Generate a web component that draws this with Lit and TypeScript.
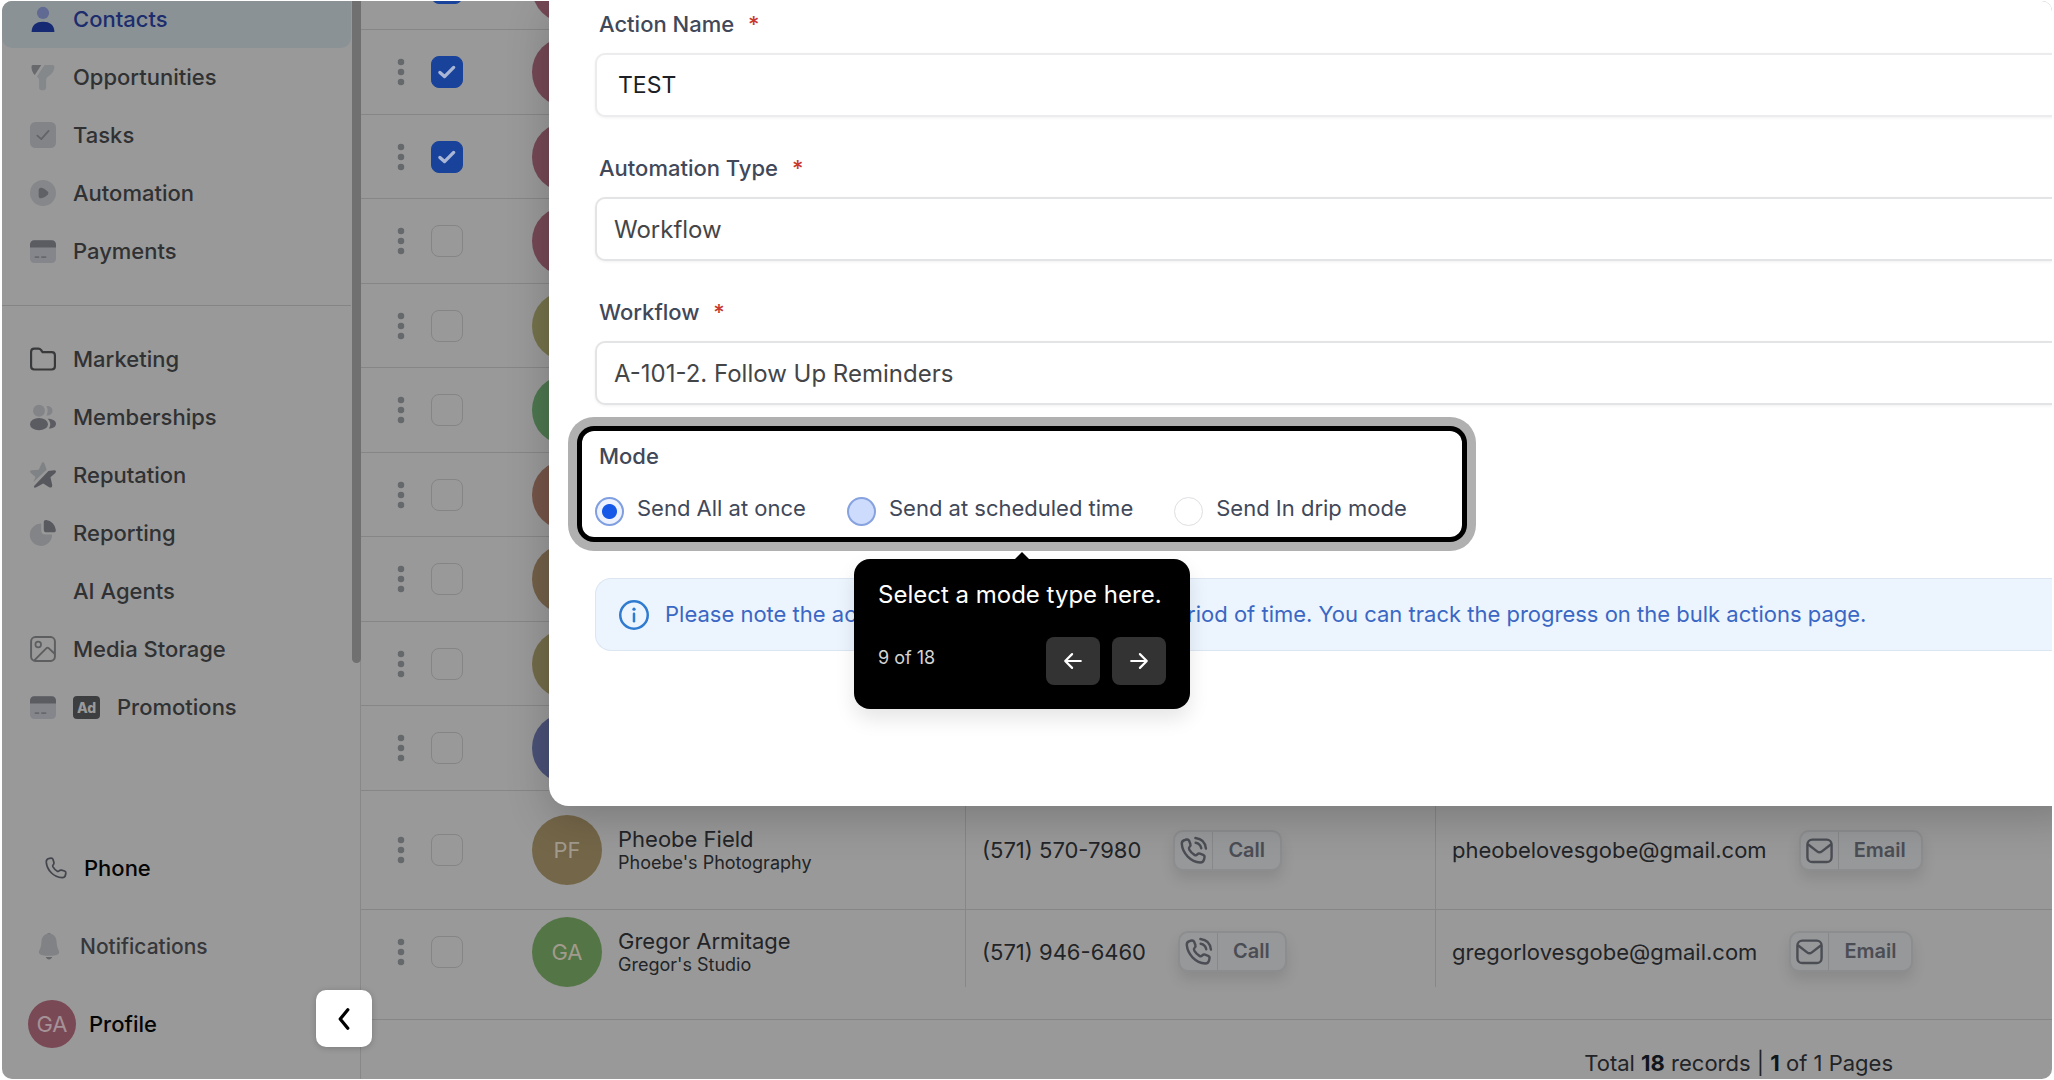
import { LitElement, html, css, svg, nothing, type TemplateResult } from "lit";
import { customElement } from "lit/decorators.js";

const glyphs: Record<string, TemplateResult> = {
  person: svg`<circle cx="12" cy="6.4" r="5.6" fill="#606a92"/><path d="M1.5 24C1.5 17.6 5.6 14.6 12 14.6S22.500 17.600 22.500 24Z" fill="#152a72"/>`,
  funnel: svg`<path d="M2.600 1H10.400L4.400 10.200C2.600 8.400 1.400 5.600 1.400 3.200 1.400 1.800 1.800 1 2.600 1Z" fill="#67696d"/><path d="M13.400 1H20.600C22.200 1 22.800 2.200 22.500 3.600 22 7 20 9 16.800 11.600 15.400 12.700 14.900 13.600 14.900 15V22C14.900 23.400 13.800 24.300 12.400 24.300H10.700C9.300 24.300 8.400 23.400 8.400 22V15C8.400 13.400 7.700 12.900 6.400 11.600Z" fill="#85888b"/>`,
  check: svg`<rect width="24" height="24" rx="5" fill="#828487"/><path d="M6.800 12.600 10.400 15.800 17.200 8.200" fill="none" stroke="#626468" stroke-width="1.600" stroke-linecap="round" stroke-linejoin="round"/>`,
  play: svg`<circle cx="12" cy="12" r="12" fill="#85878a"/><path d="M8 9.800C8 7.400 9.400 6.800 11.200 7.400 13.200 8 15 9.200 16.300 10.600 17.200 11.600 17.200 12.500 16.300 13.500 15 14.900 13.200 16 11.200 16.600 9.400 17.200 8 16.600 8 14.200Z" fill="#5f6166"/>`,
  card: svg`<rect y="2" width="24" height="21" rx="4" fill="#84868b"/><path d="M0 8.800V6C0 3.800 1.600 2 4 2H20C22.400 2 24 3.800 24 6V8.800Z" fill="#5b5c62"/><path d="M4.400 17.600H8.400M10.400 17.600H15" stroke="#66686d" stroke-width="1.600"/>`,
  folder: svg`<path d="M1 5.500C1 3.400 2 2.400 4 2.400H7.700C8.900 2.400 9.600 2.800 10.200 3.700L11.600 5.600H20C22 5.600 23 6.600 23 8.600V18.700C23 20.700 22 21.700 20 21.700H4C2 21.700 1 20.700 1 18.700Z" fill="none" stroke="#38393b" stroke-width="2"/>`,
  people: svg`<circle cx="8.300" cy="6.200" r="5.500" fill="#828487"/><path d="M15.200 1.800C18.400 1.600 20.800 3.400 20.800 6.200S18.400 10.800 15.200 10.600C16.600 8 16.600 4.400 15.200 1.800Z" fill="#828487"/><ellipse cx="8.300" cy="18.600" rx="8.300" ry="5.600" fill="#5b5c62"/><path d="M16.200 13.600C20 13.600 24 15 24 18.300 24 21.300 20.800 22.800 17.400 22.700 19.600 19.600 19 16 16.200 13.600Z" fill="#5b5c62"/>`,
  star: svg`<path d="M12 0C12.700 0 13.200 1 13.600 2L15.400 7.200 3 18.600 5 13.800 1 10.400C-.500 9-.400 8 1.500 7.700L8 7.200 10.400 2C10.800 1 11.300 0 12 0Z" fill="#808386"/><path d="M17 8.200 22.200 7.700C24.200 7.600 24.600 9 23.200 10.300L18.900 14 20.400 20.700C21 23.200 19.400 24.200 17.700 23.200L12.200 19.800 5.400 23.600C3.600 24.200 3.200 22.900 4.200 21.700Z" fill="#57585d"/>`,
  pie: svg`<path d="M10.400 3.300V10C10.400 12.200 11.600 13.400 13.800 13.400H20.400A10.300 10.300 0 1 1 10.400 3.300Z" fill="#828487"/><path d="M12.700 2C12.700.700 13.600 0 15 .100A10 10 0 0 1 23.800 9C24 10.500 23.300 11.400 22 11.400H15.400C13.600 11.400 12.700 10.500 12.700 8.700Z" fill="#595a60"/>`,
  image: svg`<rect x="1" y="1" width="22" height="22" rx="4" fill="none" stroke="#5d5e60" stroke-width="1.800"/><circle cx="7.600" cy="7.800" r="2.600" fill="none" stroke="#5d5e60" stroke-width="1.600"/><path d="M4 22.500 15.200 11.200Q16.200 10.300 17.200 11.200L23 16.600" fill="none" stroke="#5d5e60" stroke-width="1.800"/>`,
  handset: svg`<path d="M5 1.500 6.600 1.300C7.800 1.200 8.400 1.700 8.800 2.700L9.700 6C10 7.200 9.700 7.900 8.900 8.600 8.200 9.300 8.200 9.900 8.700 10.800A14 14 0 0 0 13.200 15.400C14.100 15.900 14.700 15.900 15.400 15.200 16.200 14.400 16.900 14.100 18 14.400L21.300 15.300C22.300 15.700 22.800 16.300 22.700 17.400L22.500 19C22.200 21.400 20.800 22.700 18.600 22.600 9.600 22 2 14.400 1.400 5.600 1.300 3.200 2.600 1.800 5 1.500Z" fill="none" stroke="currentColor" stroke-width="1.900"/>`,
  calling: svg`<path d="M4.800 3.300 6.300 2.900C7.300 2.700 8 3.100 8.400 4L9.400 6.600C9.800 7.600 9.500 8.200 8.800 8.900 8 9.700 8 10.300 8.500 11.200A13 13 0 0 0 12.800 15.600C13.700 16.100 14.400 16 15.100 15.200 15.800 14.500 16.400 14.200 17.400 14.600L20 15.700C20.900 16.100 21.300 16.700 21.100 17.700L20.800 19.200C20.400 21 19.400 21.900 17.600 21.900 9.600 21.200 3 14.600 2.300 6.600 2.200 4.800 3 3.700 4.800 3.300Z" fill="none" stroke="currentColor" stroke-width="2"/><path d="M13.800 5.600C16.400 6.100 17.900 7.600 18.400 10.200M13.600 1.700C18.800 2.300 21.700 5.200 22.300 10.400" fill="none" stroke="currentColor" stroke-width="2" stroke-linecap="round"/>`,
  mail: svg`<rect x="2" y="3" width="20" height="18.500" rx="4" fill="none" stroke="currentColor" stroke-width="2"/><path d="M2.400 6.800 10 12.700Q12 14.200 14 12.700L21.600 6.800" fill="none" stroke="currentColor" stroke-width="2"/>`,
  bell: svg`<path d="M9.600 1.400A3.400 3.400 0 0 1 14.400 1.400Z" fill="#66686c"/><path d="M12 .800C16.400 .800 18.800 4 19 8.200 19.200 12.400 20 14 20.800 15.600 22 18 21.400 19.600 18.800 20.200A30 30 0 0 1 5.200 20.200C2.600 19.600 2 18 3.200 15.600 4 14 4.800 12.400 5 8.200 5.200 4 7.600.800 12 .800Z" fill="#808285"/><path d="M9 22.200H15C14.400 23.800 13.400 24.400 12 24.400S9.600 23.800 9 22.200Z" fill="#66686c"/>`,
  tick: svg`<path d="M3.500 12.500 9 17.500 20 6.500" fill="none" stroke="#a9b6d6" stroke-width="4" stroke-linecap="round" stroke-linejoin="round"/>`,
  chevron: svg`<path d="M15.500 3.500 8.500 12 15.500 20.500" fill="none" stroke="#000" stroke-width="3" stroke-linecap="round" stroke-linejoin="round"/>`,
  left: svg`<path d="M20.500 12H3.500M11 4.500 3.500 12 11 19.500" fill="none" stroke="#fff" stroke-width="2.400" stroke-linecap="round" stroke-linejoin="round"/>`,
  right: svg`<path d="M3.500 12H20.500M13 4.500 20.500 12 13 19.500" fill="none" stroke="#fff" stroke-width="2.400" stroke-linecap="round" stroke-linejoin="round"/>`,
  info: svg`<circle cx="12" cy="12" r="11" fill="none" stroke="#2f7bd0" stroke-width="2"/><path d="M12 11V17" stroke="#2f7bd0" stroke-width="2" stroke-linecap="round"/><circle cx="12" cy="7.300" r="1.300" fill="#2f7bd0"/>`,
  dots: svg`<g fill="#66696c"><circle cx="12" cy="2.800" r="3"/><circle cx="12" cy="12" r="3"/><circle cx="12" cy="21.200" r="3"/></g>`,
};

const icon = (name: string) =>
  html`<svg class="icon" viewBox="0 0 24 24" aria-hidden="true">${glyphs[name]}</svg>`;

interface Contact {
  tone: string;
  checked?: boolean;
  initials?: string;
  name?: string;
  company?: string;
  phone?: string;
  email?: string;
}

const contacts: Contact[] = [
  { tone: "rose", checked: true },
  { tone: "rose", checked: true },
  { tone: "rose", checked: true },
  { tone: "rose" },
  { tone: "olive" },
  { tone: "green" },
  { tone: "clay" },
  { tone: "tan" },
  { tone: "khaki" },
  { tone: "blue" },
  { tone: "sand", initials: "PF", name: "Pheobe Field", company: "Phoebe's Photography", phone: "(571) 570-7980", email: "pheobelovesgobe@gmail.com" },
  { tone: "leaf", initials: "GA", name: "Gregor Armitage", company: "Gregor's Studio", phone: "(571) 946-6460", email: "gregorlovesgobe@gmail.com" },
];

const mainLinks = [
  ["person", "Contacts"],
  ["funnel", "Opportunities"],
  ["check", "Tasks"],
  ["play", "Automation"],
  ["card", "Payments"],
];

const moreLinks = [
  ["folder", "Marketing"],
  ["people", "Memberships"],
  ["star", "Reputation"],
  ["pie", "Reporting"],
  ["", "AI Agents"],
  ["image", "Media Storage"],
];

const base = css`
  * { box-sizing: border-box; }
  .icon { display: block; width: 26px; height: 26px; flex: none; overflow: visible; }
  button { font: inherit; color: inherit; border: 0; padding: 0; background: none; }
  a { color: inherit; text-decoration: none; }
`;

@customElement("side-nav")
export class SideNav extends LitElement {
  static styles = [base, css`
    :host { display: flex; flex-direction: column; width: 359px; flex: none; position: relative; border-right: 1px solid #888; font-size: 22px; font-weight: 500; color: #303133; }
    .group { display: flex; flex-direction: column; margin-right: 9px; }
    .group + .group { border-top: 1px solid #858585; padding-top: 24px; }
    .main { margin-top: -11px; padding-bottom: 25px; }
    .link { display: flex; align-items: center; height: 58px; padding-left: 28px; gap: 17px; }
    .current { background: #8b9296; color: #1c2c6d; border-radius: 0 0 10px 10px; }
    .blank { width: 26px; }
    .ad { width: 27px; height: 23px; border-radius: 4px; background: #3d3e3f; color: #999; font-size: 14px; line-height: 23px; font-weight: 800; text-align: center; }
    .bar { position: absolute; right: -1px; top: 0; width: 9px; height: 662px; background: #707070; border-radius: 0 0 5px 5px; }
    .foot { margin-top: auto; display: flex; flex-direction: column; padding: 0 0 16px 26px; color: #050505; }
    .foot a { display: flex; align-items: center; height: 78px; }
    .phone { padding-left: 17px; gap: 17px; }
    .phone .icon { width: 22px; height: 22px; color: #43454d; }
    .foot .notes { padding-left: 8px; gap: 18px; color: #36373a; font-size: 21px; }
    .profile { gap: 13px; }
    .avatar { width: 48px; height: 48px; border-radius: 50%; background: #7a4956; color: #a59297; font-weight: 400; line-height: 48px; text-align: center; }
    .fold { position: absolute; right: -12px; bottom: 32px; width: 56px; height: 57px; border-radius: 10px; background: #fff; display: flex; align-items: center; justify-content: center; box-shadow: 0 1px 6px rgba(0,0,0,.2); }
  `];

  render() {
    return html`
      <nav class="group main" aria-label="Main">
        ${mainLinks.map(([g, t], i) => html`<a href="#" class="link ${i === 0 ? "current" : ""}">${icon(g)}<span>${t}</span></a>`)}
      </nav>
      <nav class="group" aria-label="More">
        ${moreLinks.map(([g, t]) => html`<a href="#" class="link">${g ? icon(g) : html`<span class="blank"></span>`}<span>${t}</span></a>`)}
        <a href="#" class="link">${icon("card")}<span class="ad">Ad</span><span>Promotions</span></a>
      </nav>
      <div class="bar"></div>
      <div class="foot">
        <a href="#" class="phone">${icon("handset")}<span>Phone</span></a>
        <a href="#" class="notes">${icon("bell")}<span>Notifications</span></a>
        <a href="#" class="profile"><span class="avatar">GA</span><span>Profile</span></a>
      </div>
      <button class="fold" aria-label="Collapse menu">${icon("chevron")}</button>
    `;
  }
}

@customElement("contact-table")
export class ContactTable extends LitElement {
  static styles = [base, css`
    :host { display: flex; flex-direction: column; flex: 1; min-width: 0; margin-top: -55px; font-size: 22px; color: #222427; }
    .frame { border-bottom: 1px solid #868686; padding-bottom: 32px; }
    table { width: 100%; border-collapse: separate; border-spacing: 0; table-layout: fixed; }
    td { padding: 0; height: 84px; border-bottom: 1px solid #868686; vertical-align: middle; }
    tr:nth-child(even) td { height: 85px; }
    tr:nth-child(11) td { height: 119px; }
    tr:last-child td { height: 77px; padding-top: 6px; border-bottom: 0; }
    .menu { width: 56px; }
    .pick { width: 115px; }
    .who { width: 433px; }
    .tel { width: 470px; }
    .line { border-left: 1px solid #878787; }
    .more { display: block; margin-left: 27px; }
    .tickbox { position: relative; display: block; width: 32px; height: 32px; margin-left: 14px; }
    .tickbox input { appearance: none; display: block; margin: 0; width: 32px; height: 32px; border: 1px solid #858585; border-radius: 8px; }
    .tickbox input:checked { background: #19439b; border-color: #19439b; }
    .tickbox .icon { position: absolute; left: 6px; top: 6px; width: 20px; height: 20px; pointer-events: none; }
    .person { display: flex; align-items: center; gap: 16px; }
    .avatar { width: 70px; height: 70px; flex: none; border-radius: 50%; text-align: center; line-height: 70px; color: #a19b8e; }
    .rose { background: #744855; } .olive { background: #74724a; } .green { background: #4c764e; }
    .clay { background: #755448; } .tan { background: #725f47; } .khaki { background: #726b49; }
    .blue { background: #495176; } .sand { background: #746648; } .leaf { background: #547545; }
    .names { display: flex; flex-direction: column; }
    .name { line-height: 26px; }
    .company { font-size: 18px; line-height: 22px; }
    .reach { display: flex; align-items: center; gap: 32px; padding-left: 16px; white-space: nowrap; }
    .chip { display: flex; align-items: center; height: 41px; border: 2px solid #8c8d8e; border-radius: 10px; color: #4b4d55; font-size: 20px; font-weight: 600; box-shadow: 0 8px 14px rgba(0,0,0,.1); background: #979899; }
    .chip .icon { width: 29px; height: 29px; margin: 0 4px; }
    .chip span { border-left: 1px solid #868889; line-height: 37px; padding: 0 15px; }
    .total { display: flex; justify-content: flex-end; padding: 28px 159px 0 0; line-height: 30px; white-space: pre; }
    b { font-weight: 700; color: #10151c; }
  `];

  render() {
    return html`
      <div class="frame"><table>
        <colgroup><col class="menu"><col class="pick"><col class="who"><col class="tel"><col></colgroup>
        <tbody>${contacts.map((c, i) => html`<tr>
          <td><button class="more" aria-label="Row actions">${icon("dots")}</button></td>
          <td><label class="tickbox"><input type="checkbox" aria-label="Select contact ${i + 1}" .checked=${!!c.checked}>${c.checked ? icon("tick") : nothing}</label></td>
          <td><div class="person"><span class="avatar ${c.tone}">${c.initials ?? ""}</span>
            ${c.name ? html`<span class="names"><span class="name">${c.name}</span><span class="company">${c.company}</span></span>` : nothing}</div></td>
          <td class="line">${c.phone ? html`<div class="reach"><span>${c.phone}</span><button class="chip">${icon("calling")}<span>Call</span></button></div>` : nothing}</td>
          <td class="line">${c.email ? html`<div class="reach"><span>${c.email}</span><button class="chip">${icon("mail")}<span>Email</span></button></div>` : nothing}</td>
        </tr>`)}</tbody>
      </table></div>
      <div class="total">Total <b>18</b> records | <b>1</b> of 1 Pages</div>
    `;
  }
}

@customElement("action-dialog")
export class ActionDialog extends LitElement {
  static styles = [base, css`
    :host { position: absolute; left: 547px; right: -24px; top: 0; background: #fff; border-radius: 0 0 0 20px; box-shadow: 0 12px 44px rgba(0,0,0,.2); color: #414859; font-size: 22px; padding: 8px 0 155px 46px; }
    .field { display: flex; flex-direction: column; height: 144px; }
    .label { line-height: 30px; padding-left: 4px; font-weight: 500; }
    .star { color: #c8382c; margin-left: 8px; }
    .box { appearance: none; display: block; width: 100%; height: 64px; margin: 14px 0 0; padding: 0 17px; border: 2px solid #e3e4e6; border-right: 0; border-radius: 10px 0 0 10px; background: #fff; font: inherit; font-size: 24px; color: #444547; opacity: 1; box-shadow: 0 1px 3px rgba(0,0,0,.06); }
    .name { padding-left: 21px; font-size: 23px; color: #1c1f26; border-color: #ececee; }
    .mode { position: relative; width: 880px; height: 106px; margin: -10px 0 0 -13px; padding: 10px 0 0 13px; border: 0; border-radius: 12px; box-shadow: 0 0 0 5px #000, 0 0 0 14px #b0b0b0; }
    .title { float: left; width: 100%; padding: 0 0 0 4px; line-height: 30px; font-weight: 500; }
    .choices { clear: both; display: flex; gap: 41px; padding-top: 22px; }
    .choice { display: flex; gap: 13px; line-height: 30px; white-space: nowrap; }
    .choice input { appearance: none; flex: none; width: 29px; height: 29px; margin: 4px 0 0; border: 1px solid #dedfe2; border-radius: 50%; background: #fff; }
    .choice input:checked { border: 2px solid #7f9fe0; background: radial-gradient(circle, #1557e6 0 7px, #edf2fe 8px); }
    .choice .hover { border: 2px solid #86a2df; background: #cddcfc; }
    .tip { position: absolute; z-index: 2; left: 272px; top: 128px; width: 336px; height: 150px; padding: 17px 24px; border-radius: 16px; background: #000; color: #fff; font-size: 24px; line-height: 38px; box-shadow: 0 10px 20px rgba(0,0,0,.1); white-space: nowrap; }
    .tip::before { content: ""; position: absolute; left: 161px; top: -7px; border: 7px solid transparent; border-top: 0; border-bottom-color: #000; }
    .steps { display: flex; align-items: center; gap: 12px; margin-top: 23px; }
    .count { flex: 1; font-size: 18px; line-height: 24px; color: #d4d4d4; padding-bottom: 6px; }
    .step { display: flex; align-items: center; justify-content: center; width: 54px; height: 48px; border-radius: 8px; background: #333; }
    .step .icon { width: 22px; height: 22px; }
    .note { display: flex; align-items: center; gap: 16px; height: 73px; margin: 41px 0 0; padding-left: 23px; border: 1px solid #dbe6f2; border-right: 0; border-radius: 16px 0 0 16px; background: #ecf4fe; color: #3a67c4; white-space: nowrap; overflow: hidden; }
    .note .icon { width: 30px; height: 30px; }
    .note span { padding-bottom: 2px; }
  `];

  render() {
    return html`
      <div class="field">
        <label class="label" for="action">Action Name <span class="star">*</span></label>
        <input class="box name" id="action" value="TEST">
      </div>
      <div class="field">
        <label class="label" for="type">Automation Type <span class="star">*</span></label>
        <select class="box" id="type"><option>Workflow</option></select>
      </div>
      <div class="field">
        <label class="label" for="flow">Workflow <span class="star">*</span></label>
        <select class="box" id="flow"><option>A-101-2. Follow Up Reminders</option></select>
      </div>
      <fieldset class="mode">
        <legend class="title">Mode</legend>
        <div class="choices">
          <label class="choice"><input type="radio" name="mode" checked><span>Send All at once</span></label>
          <label class="choice"><input class="hover" type="radio" name="mode"><span>Send at scheduled time</span></label>
          <label class="choice"><input type="radio" name="mode"><span>Send In drip mode</span></label>
        </div>
        <div class="tip" role="tooltip">
          Select a mode type here.
          <div class="steps">
            <span class="count">9 of 18</span>
            <button class="step" type="button" aria-label="Previous">${icon("left")}</button>
            <button class="step" type="button" aria-label="Next">${icon("right")}</button>
          </div>
        </div>
      </fieldset>
      <p class="note">${icon("info")}<span>Please note the action will be performed over a period of time. You can track the progress on the bulk actions page.</span></p>
    `;
  }
}

@customElement("app-root")
export class AppRoot extends LitElement {
  static styles = [base, css`
    :host { display: block; background: #fff; padding: 1px 2px; font-family: Inter, "Liberation Sans", sans-serif; }
    .shell { position: relative; display: flex; min-height: calc(100vh - 2px); max-height: calc(100vh - 2px); overflow: hidden; border-radius: 10px; background: #999; }
  `];

  render() {
    return html`<div class="shell"><side-nav></side-nav><contact-table></contact-table><action-dialog></action-dialog></div>`;
  }
}
